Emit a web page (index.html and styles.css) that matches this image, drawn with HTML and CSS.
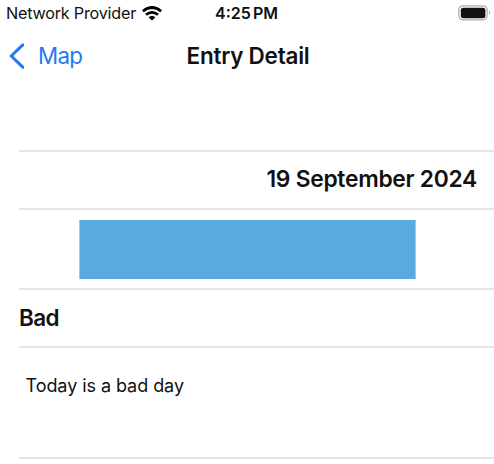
FILE: index.html
```html
<!DOCTYPE html>
<html lang="en"><head><meta charset="utf-8"><title>Entry Detail</title><link rel="stylesheet" href="styles.css"></head>
<body>
<div class="status"><div class="carrier"><span class="provider">Network Provider</span>
<svg class="wifi" width="20" height="15" viewBox="0 0 20 15"><g fill="none" stroke="#000" stroke-width="2.7"><path d="M.8 5.3Q10-2.3 19.2 5.3"/><path d="M4 8.8Q10 3.8 16 8.8"/></g><path d="M6.6 11.2Q10 8.2 13.4 11.2L10 14.6Z"/></svg></div>
<span class="time">4:25<span class="meridiem"> PM</span></span>
<svg class="battery" width="33" height="16" viewBox="0 0 33 16"><rect x=".8" y=".8" width="28.4" height="14" rx="4.2" fill="none" stroke="#aaa" stroke-width="1.2"/><rect x="2.8" y="2.7" width="24.6" height="10.6" rx="2.5" fill="#111"/><path d="M31 5.2Q33 7.8 31 10.4Z" fill="#aaa"/></svg></div>
<header class="nav"><a class="back"><svg width="16" height="26" viewBox="0 0 16 26"><path d="M14.8 1.8 3.2 13 14.8 24.2" fill="none" stroke="#2579f4" stroke-width="3.1" stroke-linecap="round" stroke-linejoin="round"/></svg><span class="back-label">Map</span></a><h1 class="title">Entry Detail</h1></header>
<main class="entry"><div class="row date"><span>19 September 2024</span></div><div class="row swatch-row"><div class="swatch"></div></div><div class="row mood"><span>Bad</span></div><div class="row note"><span>Today is a bad day</span></div></main>
</body></html>
```
FILE: styles.css
```css
*{box-sizing:border-box}
body{margin:0;width:494px;height:464px;overflow:hidden;background:#fff;color:#111;font-family:Inter,sans-serif}
.status{height:26px;display:grid;grid-template-columns:1fr auto 1fr;align-items:center;padding:0 3px 0 6px}
.carrier{display:flex;align-items:center;gap:6px;font-size:16.2px;letter-spacing:-.22px;white-space:nowrap}
.time{font-size:16px;font-weight:600;margin-right:4px}
.meridiem{word-spacing:-2px}
.battery{justify-self:end}
.nav{height:59px;display:grid;grid-template-columns:1fr auto 1fr;align-items:center;padding-left:8px}
.back{display:flex;align-items:center;gap:14px;color:#2579f4;font-size:22.3px;letter-spacing:-.75px}
.title{margin:0 6px 0 0;font-size:22.5px;font-weight:600;letter-spacing:-.25px}
.entry{margin:65px 0 0 19px}
.row{display:flex;align-items:center;border-top:2px solid #e5e5e5}
.date{height:58px;justify-content:flex-end;padding:0 17px 3px 0;font-size:22.8px;font-weight:600;letter-spacing:-.27px}
.swatch-row{height:80px;padding-left:60px}
.swatch{width:337px;height:59px;background:#5aaae2;border:solid #9bcaed;border-width:0 1px}
.mood{height:58px;font-size:22.5px;font-weight:600;letter-spacing:-.6px;padding-bottom:2px}
.note{height:113px;border-bottom:2px solid #e5e5e5;padding:0 0 35px 6.5px;font-size:18px;letter-spacing:-.06px}
```
